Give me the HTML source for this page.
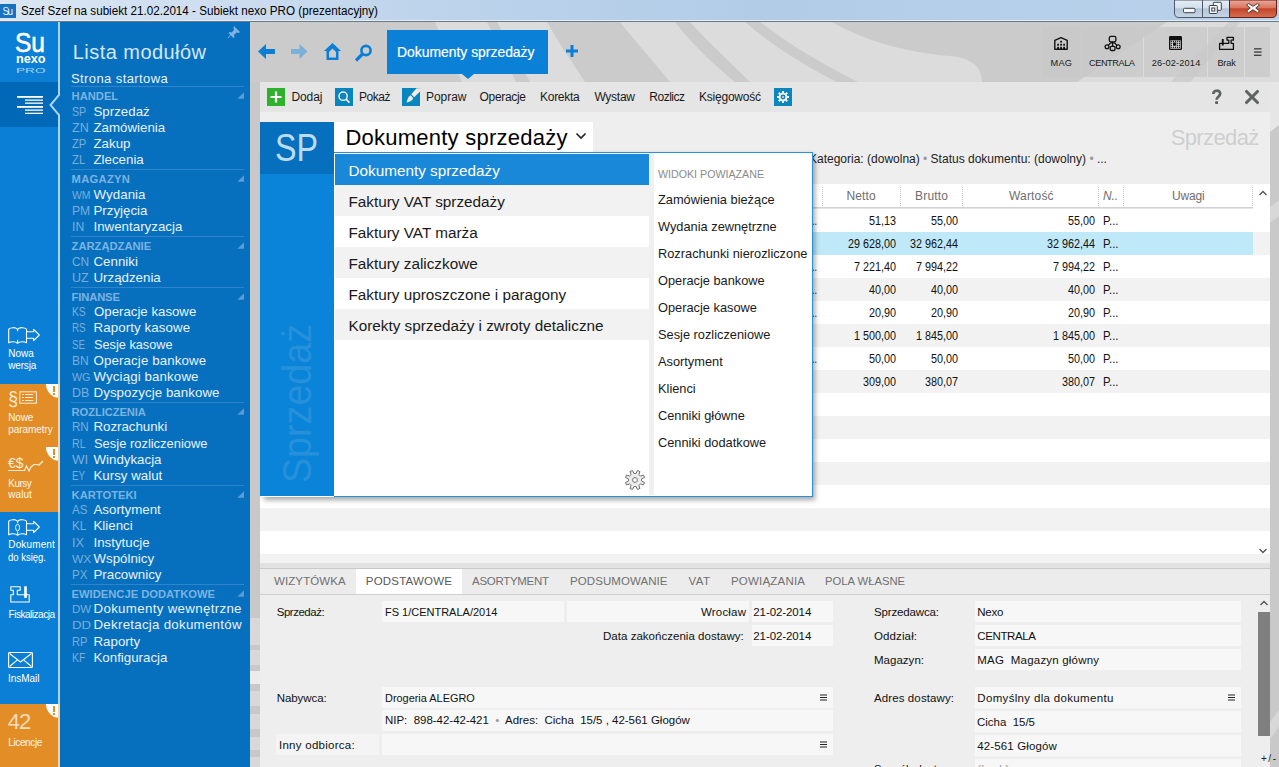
<!DOCTYPE html>
<html><head><meta charset="utf-8"><title>Subiekt nexo PRO</title>
<style>
*{margin:0;padding:0;box-sizing:border-box}
html,body{width:1279px;height:767px;overflow:hidden;background:#cbcbcb;font-family:"Liberation Sans",sans-serif}
.a{position:absolute;white-space:nowrap}
svg.a{overflow:visible}
</style></head><body>
<div class="a" style="left:0px;top:0px;width:1279px;height:21px;background:linear-gradient(90deg,#dae6f3 0%,#cfdef0 15%,#bcd3eb 35%,#b2cce8 60%,#b6cfea 80%,#b9d1eb 100%);"></div>
<div class="a" style="left:0px;top:20px;width:1279px;height:1px;background:#e4edf6;"></div>
<div class="a" style="left:0px;top:21px;width:1279px;height:1px;background:#6b7886;"></div>
<div class="a" style="left:0px;top:4px;width:16px;height:14px;background:#1573c2;"></div>
<div class="a" style="left:2.50px;top:7.00px;font-size:10px;line-height:10px;color:#eef5fb;letter-spacing:-1.731px;">Su</div>
<div class="a" style="left:21.00px;top:4.80px;font-size:12px;line-height:12px;color:#000;transform:scaleX(0.9713);transform-origin:0 0;">Szef Szef na subiekt 21.02.2014 - Subiekt nexo PRO (prezentacyjny)</div>
<svg class="a" style="left:1173px;top:0px" width="106" height="19" viewBox="0 0 106 19">
<defs><linearGradient id="wb" x1="0" y1="0" x2="0" y2="1"><stop offset="0" stop-color="#e6eef7"/><stop offset="0.45" stop-color="#d3dfec"/><stop offset="0.5" stop-color="#b4c6da"/><stop offset="1" stop-color="#c8d6e6"/></linearGradient>
<linearGradient id="wc" x1="0" y1="0" x2="0" y2="1"><stop offset="0" stop-color="#eaa89a"/><stop offset="0.45" stop-color="#d9775f"/><stop offset="0.5" stop-color="#c5442a"/><stop offset="1" stop-color="#d56f52"/></linearGradient></defs>
<path d="M1.5 0 V13 Q1.5 17.5 6 17.5 H56.5 V0 Z" fill="url(#wb)" stroke="#4f5a66" stroke-width="1"/>
<path d="M56.5 0 V17.5 H99 Q103.5 17.5 103.5 13 V0 Z" fill="url(#wc)" stroke="#6a1e12" stroke-width="1"/>
<line x1="29.5" y1="0" x2="29.5" y2="17" stroke="#4f5a66"/>
<rect x="10.5" y="8.3" width="11.5" height="4.4" rx="1" fill="#f4f6f8" stroke="#39424c"/>
<rect x="40.3" y="2.3" width="8" height="8" rx="0.8" fill="#f4f6f8" stroke="#39424c"/><rect x="36.3" y="5.5" width="8" height="8" rx="0.8" fill="#f4f6f8" stroke="#39424c"/><rect x="38.8" y="8" width="3" height="3" fill="none" stroke="#39424c"/>
<path d="M75.5 3.5 L80 6.3 L84.5 3.5 L86.5 5 L82.8 8 L86.5 11 L84.5 12.8 L80 9.8 L75.5 12.8 L73.5 11 L77.2 8 L73.5 5 Z" fill="#fafafa" stroke="#4a2a22" stroke-width="0.9" stroke-linejoin="round"/>
</svg>
<div class="a" style="left:250px;top:22px;width:1029px;height:745px;background:#cbcbcb;"></div>
<svg class="a" style="left:250px;top:22px" width="1029" height="60" viewBox="250 22 1029 60">
<path d="M435 22 L487 22 L516 82 L462 82 Z" fill="#dcdcdc"/><path d="M1167 22 L1229 22 L1171 82 L1077 82 Z" fill="#dcdcdc"/><path d="M1240 22 L1279 22 L1279 82 L1190 82 Z" fill="#dcdcdc"/><path d="M1229 22 L1240 22 L1190 82 L1171 82 Z" fill="#cfcfcf"/>
<path d="M497 22 L547 22 C560 45 572 62 585 82 L530 82 Z" fill="#dcdcdc"/>
<path d="M620 22 L675 22 C693 45 712 63 735 82 L670 82 C652 60 636 42 620 22 Z" fill="#dcdcdc"/>
<path d="M690 22 L745 22 C772 45 803 65 837 82 L750 82 C728 60 708 42 690 22 Z" fill="#dcdcdc"/>
<path d="M760 22 L832 22 C860 38 900 52 950 56 C975 58 982 70 982 82 L858 82 C822 64 790 45 760 22 Z" fill="#dcdcdc"/>
</svg>
<svg class="a" style="left:256px;top:40px" width="120" height="24" viewBox="256 40 120 24">
<path d="M258 51.5 L266 44 L266 49 L275 49 L275 54 L266 54 L266 59 Z" fill="#0a7fd5"/>
<path d="M307.5 51.5 L299.5 44 L299.5 49 L291 49 L291 54 L299.5 54 L299.5 59 Z" fill="#7ab1da"/>
<path d="M324 51 L332.5 43 L341 51 L338.5 51 L338.5 60 L326.5 60 L326.5 51 Z M329 52 L329 57.5 L336 57.5 L336 52 L332.5 48.5 Z" fill="#0a7fd5" fill-rule="evenodd"/>
<circle cx="366" cy="50.5" r="4.6" fill="none" stroke="#0a7fd5" stroke-width="2.6"/>
<path d="M362.5 54 L356 60.5" stroke="#0a7fd5" stroke-width="3.2" stroke-linecap="butt"/>
</svg>
<div class="a" style="left:387px;top:30px;width:161px;height:44px;background:#0a80d6;"></div>
<svg class="a" style="left:462px;top:74px" width="12" height="6" viewBox="0 0 12 6"><path d="M0 0 L12 0 L6 5 Z" fill="#0a80d6"/></svg>
<div class="a" style="left:397.00px;top:44.80px;font-size:14.3px;line-height:14.3px;color:#fff;transform:scaleX(0.9721);transform-origin:0 0;-webkit-text-stroke:0.2px #fff;">Dokumenty sprzedaży</div>
<svg class="a" style="left:565px;top:44px" width="14" height="14" viewBox="0 0 14 14"><path d="M5.5 1 H8.5 V5.5 H13 V8.5 H8.5 V13 H5.5 V8.5 H1 V5.5 H5.5 Z" fill="#0a7fd5"/></svg>
<div class="a" style="left:1042px;top:27px;width:38px;height:50px;background:rgba(200,200,200,0.72);"></div>
<div class="a" style="left:1081px;top:27px;width:62px;height:50px;background:rgba(200,200,200,0.72);"></div>
<div class="a" style="left:1144px;top:27px;width:63px;height:50px;background:rgba(200,200,200,0.72);"></div>
<div class="a" style="left:1208px;top:27px;width:36px;height:50px;background:rgba(200,200,200,0.72);"></div>
<div class="a" style="left:1245px;top:27px;width:25px;height:50px;background:rgba(200,200,200,0.72);"></div>
<div class="a" style="left:1050.45px;top:58.70px;font-size:9.2px;line-height:9.2px;color:#1a1a1a;letter-spacing:0.286px;">MAG</div>
<div class="a" style="left:1089.00px;top:58.70px;font-size:9.2px;line-height:9.2px;color:#1a1a1a;letter-spacing:-0.430px;">CENTRALA</div>
<div class="a" style="left:1151.75px;top:58.70px;font-size:9.2px;line-height:9.2px;color:#1a1a1a;letter-spacing:0.167px;">26-02-2014</div>
<div class="a" style="left:1217.45px;top:58.70px;font-size:9.2px;line-height:9.2px;color:#1a1a1a;letter-spacing:-0.197px;">Brak</div>
<svg class="a" style="left:1040px;top:30px" width="235" height="25" viewBox="1040 30 235 25">
<path d="M1054.8 49.3 V40.3 L1061 37.6 L1067.2 40.3 V49.3 Z" fill="none" stroke="#111" stroke-width="1.4" stroke-linejoin="round"/>
<g fill="#111"><rect x="1060.2" y="40.8" width="1.8" height="1.8"/><rect x="1057.2" y="43.8" width="1.8" height="1.8"/><rect x="1060.2" y="43.8" width="1.8" height="1.8"/><rect x="1063.2" y="43.8" width="1.8" height="1.8"/><rect x="1057.2" y="46.8" width="1.8" height="2.5"/><rect x="1060.2" y="46.8" width="1.8" height="2.5"/><rect x="1063.2" y="46.8" width="1.8" height="2.5"/></g>
<g fill="none" stroke="#111" stroke-width="1.3"><rect x="1109.3" y="36.4" width="6.6" height="5.4" rx="1.6"/><circle cx="1107" cy="46.8" r="1.9"/><circle cx="1118.2" cy="46.8" r="1.9"/><rect x="1110.2" y="46.3" width="4.8" height="4.2" rx="1.3"/><path d="M1112.6 41.8 V46.3 M1108.3 45.4 L1110.6 42.8 H1114.6 L1116.9 45.4"/></g>
<rect x="1169" y="36" width="13" height="14" rx="1.2" fill="#111"/><rect x="1170.3" y="40.3" width="10.4" height="8.4" fill="#cbcbcb"/>
<g fill="#111"><rect x="1170.8" y="40.8" width="1.1" height="1.1"/><rect x="1172.9" y="40.8" width="1.1" height="1.1"/><rect x="1174.9" y="40.8" width="1.1" height="1.1"/><rect x="1176.9" y="40.8" width="1.1" height="1.1"/><rect x="1178.9" y="40.8" width="1.1" height="1.1"/>
<rect x="1170.8" y="42.8" width="1.1" height="1.1"/><rect x="1178.9" y="42.8" width="1.1" height="1.1"/><rect x="1176.9" y="42.8" width="1.1" height="1.1"/><rect x="1170.8" y="44.8" width="1.1" height="1.1"/><rect x="1176.9" y="44.8" width="1.1" height="1.1"/><rect x="1178.9" y="44.8" width="1.1" height="1.1"/>
<rect x="1170.8" y="46.8" width="1.1" height="1.1"/><rect x="1172.9" y="46.8" width="1.1" height="1.1"/><rect x="1174.9" y="46.8" width="1.1" height="1.1"/><rect x="1176.9" y="46.8" width="1.1" height="1.1"/><rect x="1178.9" y="46.8" width="1.1" height="1.1"/>
<rect x="1173" y="42.5" width="3.2" height="3.2"/></g>
<path d="M1227 37.4 H1233.4 V40.2 H1231.1 V43.3 H1233.4 V49.4 H1219.6 V43.3 H1228.8 V40.2 H1227 Z" fill="none" stroke="#111" stroke-width="1.3" stroke-linejoin="round"/>
<rect x="1221.8" y="39" width="1.9" height="6.5" fill="#111"/>
<g fill="#222"><rect x="1254" y="48.3" width="7.5" height="1.1"/><rect x="1254" y="51.5" width="7.5" height="1.1"/><rect x="1254" y="54.7" width="7.5" height="1.1"/></g>
</svg>
<div class="a" style="left:260px;top:82px;width:1010px;height:30px;background:#e5e5e5;"></div>
<div class="a" style="left:260px;top:112px;width:1010px;height:10px;background:#eeeeee;"></div>
<div class="a" style="left:267px;top:88px;width:18px;height:18px;background:#2eb22e;"></div>
<svg class="a" style="left:267px;top:88px" width="18" height="18" viewBox="0 0 18 18"><path d="M7.9 3.5 H10.1 V7.9 H14.5 V10.1 H10.1 V14.5 H7.9 V10.1 H3.5 V7.9 H7.9 Z" fill="#fff"/></svg>
<div class="a" style="left:335px;top:88px;width:18px;height:18px;background:#0686bd;"></div>
<svg class="a" style="left:335px;top:88px" width="18" height="18" viewBox="0 0 18 18"><circle cx="8.1" cy="8.2" r="4.1" fill="none" stroke="#f1ece8" stroke-width="1.5"/><path d="M11 11.2 L14.4 14.6" stroke="#f1ece8" stroke-width="1.9"/></svg>
<div class="a" style="left:402px;top:88px;width:18px;height:18px;background:#0686bd;"></div>
<svg class="a" style="left:402px;top:88px" width="18" height="18" viewBox="0 0 18 18"><path d="M14.6 0.3 L18 0.3 L18 3.4 L12.2 9.2 L9.2 6.2 Z" fill="#f1ece8"/><path d="M8.5 7.2 L11.2 9.9 C10.7 12.2 8.6 13.6 4.6 14.6 C5.2 11.2 6.4 8.6 8.5 7.2 Z" fill="#f1ece8"/></svg>
<div class="a" style="left:291.40px;top:91.20px;font-size:12px;line-height:12px;color:#1a1a1a;letter-spacing:-0.088px;">Dodaj</div>
<div class="a" style="left:359.00px;top:91.20px;font-size:12px;line-height:12px;color:#1a1a1a;letter-spacing:-0.463px;">Pokaż</div>
<div class="a" style="left:426.00px;top:91.20px;font-size:12px;line-height:12px;color:#1a1a1a;letter-spacing:-0.037px;">Popraw</div>
<div class="a" style="left:479.50px;top:91.20px;font-size:12px;line-height:12px;color:#1a1a1a;letter-spacing:-0.313px;">Operacje</div>
<div class="a" style="left:540.00px;top:91.20px;font-size:12px;line-height:12px;color:#1a1a1a;letter-spacing:-0.276px;">Korekta</div>
<div class="a" style="left:594.40px;top:91.20px;font-size:12px;line-height:12px;color:#1a1a1a;letter-spacing:-0.259px;">Wystaw</div>
<div class="a" style="left:649.30px;top:91.20px;font-size:12px;line-height:12px;color:#1a1a1a;letter-spacing:-0.495px;">Rozlicz</div>
<div class="a" style="left:699.00px;top:91.20px;font-size:12px;line-height:12px;color:#1a1a1a;letter-spacing:-0.226px;">Księgowość</div>
<div class="a" style="left:774px;top:88px;width:18px;height:18px;background:#0a86bc;"></div>
<svg class="a" style="left:774px;top:88px" width="18" height="18" viewBox="0 0 18 18"><path d="M7.32 4.93 L7.97 4.72 L7.95 2.99 L10.05 2.99 L10.03 4.72 L10.68 4.93 L11.30 5.25 L12.51 4.01 L13.99 5.49 L12.75 6.70 L13.07 7.32 L13.28 7.97 L15.01 7.95 L15.01 10.05 L13.28 10.03 L13.07 10.68 L12.75 11.30 L13.99 12.51 L12.51 13.99 L11.30 12.75 L10.68 13.07 L10.03 13.28 L10.05 15.01 L7.95 15.01 L7.97 13.28 L7.32 13.07 L6.70 12.75 L5.49 13.99 L4.01 12.51 L5.25 11.30 L4.93 10.68 L4.72 10.03 L2.99 10.05 L2.99 7.95 L4.72 7.97 L4.93 7.32 L5.25 6.70 L4.01 5.49 L5.49 4.01 L6.70 5.25 Z M9 6.6 A2.4 2.4 0 1 0 9 11.4 A2.4 2.4 0 1 0 9 6.6 Z" fill="#f1ece8" fill-rule="evenodd"/><rect x="8.2" y="8.2" width="1.6" height="1.6" fill="#f1ece8"/></svg>
<svg class="a" style="left:1208px;top:86px" width="18" height="22" viewBox="1208 86 18 22"><path d="M1213.3 94 C1213.3 89.8 1220.2 89.6 1220.2 93.6 C1220.2 96.8 1216.6 96.6 1216.6 99.8" fill="none" stroke="#5f6461" stroke-width="2.7"/><rect x="1215.2" y="101.2" width="2.8" height="2.8" fill="#5f6461"/></svg>
<svg class="a" style="left:1243px;top:88px" width="18" height="18" viewBox="0 0 18 18"><path d="M3.5 3.5 L14.5 14.5 M14.5 3.5 L3.5 14.5" stroke="#5f6461" stroke-width="3.1" stroke-linecap="round"/></svg>
<div class="a" style="left:260px;top:122px;width:1010px;height:62px;background:#eeeeee;"></div>
<div class="a" style="left:334px;top:122px;width:259px;height:30px;background:#ffffff;"></div>
<div class="a" style="left:345.40px;top:126.70px;font-size:22px;line-height:22px;color:#000;letter-spacing:0.242px;">Dokumenty sprzedaży</div>
<svg class="a" style="left:574px;top:131px" width="14" height="10" viewBox="0 0 14 10"><path d="M2.5 2.5 L7 7 L11.5 2.5" fill="none" stroke="#222" stroke-width="1.6"/></svg>
<div class="a" style="left:1170.70px;top:127.30px;font-size:22px;line-height:22px;color:#cfcfcf;letter-spacing:-0.620px;">Sprzedaż</div>
<div class="a" style="left:809.00px;top:153.00px;font-size:12px;line-height:12px;color:#222;">Kategoria: (dowolna) <span style="color:#999">•</span> Status dokumentu: (dowolny) <span style="color:#999">•</span> ...</div>
<div class="a" style="left:260px;top:184px;width:1010px;height:25px;background:#ffffff;"></div>
<div class="a" style="left:260px;top:207px;width:993px;height:1px;background:#d2d2d2;"></div>
<div class="a" style="left:260px;top:208px;width:993px;height:1px;background:#e6e6e6;"></div>
<div class="a" style="left:260px;top:209px;width:1010px;height:23px;background:#ffffff;"></div>
<div class="a" style="left:260px;top:232px;width:1010px;height:23px;background:#f2f2f2;"></div>
<div class="a" style="left:260px;top:255px;width:1010px;height:23px;background:#ffffff;"></div>
<div class="a" style="left:260px;top:278px;width:1010px;height:23px;background:#f2f2f2;"></div>
<div class="a" style="left:260px;top:301px;width:1010px;height:23px;background:#ffffff;"></div>
<div class="a" style="left:260px;top:324px;width:1010px;height:23px;background:#f2f2f2;"></div>
<div class="a" style="left:260px;top:347px;width:1010px;height:23px;background:#ffffff;"></div>
<div class="a" style="left:260px;top:370px;width:1010px;height:23px;background:#f2f2f2;"></div>
<div class="a" style="left:260px;top:393px;width:1010px;height:23px;background:#ffffff;"></div>
<div class="a" style="left:260px;top:416px;width:1010px;height:23px;background:#f2f2f2;"></div>
<div class="a" style="left:260px;top:439px;width:1010px;height:23px;background:#ffffff;"></div>
<div class="a" style="left:260px;top:462px;width:1010px;height:23px;background:#f2f2f2;"></div>
<div class="a" style="left:260px;top:485px;width:1010px;height:23px;background:#ffffff;"></div>
<div class="a" style="left:260px;top:508px;width:1010px;height:23px;background:#f2f2f2;"></div>
<div class="a" style="left:260px;top:531px;width:1010px;height:23px;background:#ffffff;"></div>
<div class="a" style="left:260px;top:554px;width:1010px;height:9px;background:#f2f2f2;"></div>
<div class="a" style="left:260px;top:232px;width:993px;height:23px;background:#bfe9f9;"></div>
<div class="a" style="left:822px;top:187px;width:0;height:19px;border-left:1px dotted #c8c8c8"></div>
<div class="a" style="left:900px;top:187px;width:0;height:19px;border-left:1px dotted #c8c8c8"></div>
<div class="a" style="left:962px;top:187px;width:0;height:19px;border-left:1px dotted #c8c8c8"></div>
<div class="a" style="left:1098px;top:187px;width:0;height:19px;border-left:1px dotted #c8c8c8"></div>
<div class="a" style="left:1123px;top:187px;width:0;height:19px;border-left:1px dotted #c8c8c8"></div>
<div class="a" style="left:1252px;top:187px;width:0;height:19px;border-left:1px dotted #c8c8c8"></div>
<div class="a" style="left:846.40px;top:190.00px;font-size:12px;line-height:12px;color:#6e6e6e;letter-spacing:0.130px;">Netto</div>
<div class="a" style="left:915.00px;top:190.00px;font-size:12px;line-height:12px;color:#6e6e6e;letter-spacing:0.197px;">Brutto</div>
<div class="a" style="left:1009.00px;top:190.00px;font-size:12px;line-height:12px;color:#6e6e6e;letter-spacing:0.174px;">Wartość</div>
<div class="a" style="left:1103.00px;top:190.00px;font-size:12px;line-height:12px;color:#6e6e6e;font-style:italic;letter-spacing:-0.167px;">N..</div>
<div class="a" style="left:1172.00px;top:190.00px;font-size:12px;line-height:12px;color:#6e6e6e;letter-spacing:-0.186px;">Uwagi</div>
<svg class="a" style="left:1257px;top:188px" width="12" height="10" viewBox="0 0 12 10"><path d="M2.5 7 L6 3.5 L9.5 7" fill="none" stroke="#555" stroke-width="1.4"/></svg>
<div class="a" style="left:869.27px;top:215.30px;font-size:12px;line-height:12px;color:#111;transform:scaleX(0.9000);transform-origin:0 0;">51,13</div>
<div class="a" style="left:931.17px;top:215.30px;font-size:12px;line-height:12px;color:#111;transform:scaleX(0.9000);transform-origin:0 0;">55,00</div>
<div class="a" style="left:1067.57px;top:215.30px;font-size:12px;line-height:12px;color:#111;transform:scaleX(0.9000);transform-origin:0 0;">55,00</div>
<div class="a" style="left:1103.00px;top:215.30px;font-size:12px;line-height:12px;color:#111;transform:scaleX(0.9417);transform-origin:0 0;">P...</div>
<div class="a" style="left:812.00px;top:215.30px;font-size:12px;line-height:12px;color:#111;transform:scaleX(0.7499);transform-origin:0 0;">..</div>
<div class="a" style="left:848.25px;top:238.30px;font-size:12px;line-height:12px;color:#111;transform:scaleX(0.9000);transform-origin:0 0;">29 628,00</div>
<div class="a" style="left:910.15px;top:238.30px;font-size:12px;line-height:12px;color:#111;transform:scaleX(0.9000);transform-origin:0 0;">32 962,44</div>
<div class="a" style="left:1046.55px;top:238.30px;font-size:12px;line-height:12px;color:#111;transform:scaleX(0.9000);transform-origin:0 0;">32 962,44</div>
<div class="a" style="left:1103.00px;top:238.30px;font-size:12px;line-height:12px;color:#111;transform:scaleX(0.9417);transform-origin:0 0;">P...</div>
<div class="a" style="left:854.26px;top:261.30px;font-size:12px;line-height:12px;color:#111;transform:scaleX(0.9000);transform-origin:0 0;">7 221,40</div>
<div class="a" style="left:916.16px;top:261.30px;font-size:12px;line-height:12px;color:#111;transform:scaleX(0.9000);transform-origin:0 0;">7 994,22</div>
<div class="a" style="left:1052.56px;top:261.30px;font-size:12px;line-height:12px;color:#111;transform:scaleX(0.9000);transform-origin:0 0;">7 994,22</div>
<div class="a" style="left:1103.00px;top:261.30px;font-size:12px;line-height:12px;color:#111;transform:scaleX(0.9417);transform-origin:0 0;">P...</div>
<div class="a" style="left:812.00px;top:261.30px;font-size:12px;line-height:12px;color:#111;transform:scaleX(0.7499);transform-origin:0 0;">..</div>
<div class="a" style="left:869.27px;top:284.30px;font-size:12px;line-height:12px;color:#111;transform:scaleX(0.9000);transform-origin:0 0;">40,00</div>
<div class="a" style="left:931.17px;top:284.30px;font-size:12px;line-height:12px;color:#111;transform:scaleX(0.9000);transform-origin:0 0;">40,00</div>
<div class="a" style="left:1067.57px;top:284.30px;font-size:12px;line-height:12px;color:#111;transform:scaleX(0.9000);transform-origin:0 0;">40,00</div>
<div class="a" style="left:1103.00px;top:284.30px;font-size:12px;line-height:12px;color:#111;transform:scaleX(0.9417);transform-origin:0 0;">P...</div>
<div class="a" style="left:812.00px;top:284.30px;font-size:12px;line-height:12px;color:#111;transform:scaleX(0.7499);transform-origin:0 0;">..</div>
<div class="a" style="left:869.27px;top:307.30px;font-size:12px;line-height:12px;color:#111;transform:scaleX(0.9000);transform-origin:0 0;">20,90</div>
<div class="a" style="left:931.17px;top:307.30px;font-size:12px;line-height:12px;color:#111;transform:scaleX(0.9000);transform-origin:0 0;">20,90</div>
<div class="a" style="left:1067.57px;top:307.30px;font-size:12px;line-height:12px;color:#111;transform:scaleX(0.9000);transform-origin:0 0;">20,90</div>
<div class="a" style="left:1103.00px;top:307.30px;font-size:12px;line-height:12px;color:#111;transform:scaleX(0.9417);transform-origin:0 0;">P...</div>
<div class="a" style="left:812.00px;top:307.30px;font-size:12px;line-height:12px;color:#111;transform:scaleX(0.7499);transform-origin:0 0;">..</div>
<div class="a" style="left:854.26px;top:330.30px;font-size:12px;line-height:12px;color:#111;transform:scaleX(0.9000);transform-origin:0 0;">1 500,00</div>
<div class="a" style="left:916.16px;top:330.30px;font-size:12px;line-height:12px;color:#111;transform:scaleX(0.9000);transform-origin:0 0;">1 845,00</div>
<div class="a" style="left:1052.56px;top:330.30px;font-size:12px;line-height:12px;color:#111;transform:scaleX(0.9000);transform-origin:0 0;">1 845,00</div>
<div class="a" style="left:1103.00px;top:330.30px;font-size:12px;line-height:12px;color:#111;transform:scaleX(0.9417);transform-origin:0 0;">P...</div>
<div class="a" style="left:869.27px;top:353.30px;font-size:12px;line-height:12px;color:#111;transform:scaleX(0.9000);transform-origin:0 0;">50,00</div>
<div class="a" style="left:931.17px;top:353.30px;font-size:12px;line-height:12px;color:#111;transform:scaleX(0.9000);transform-origin:0 0;">50,00</div>
<div class="a" style="left:1067.57px;top:353.30px;font-size:12px;line-height:12px;color:#111;transform:scaleX(0.9000);transform-origin:0 0;">50,00</div>
<div class="a" style="left:1103.00px;top:353.30px;font-size:12px;line-height:12px;color:#111;transform:scaleX(0.9417);transform-origin:0 0;">P...</div>
<div class="a" style="left:812.00px;top:353.30px;font-size:12px;line-height:12px;color:#111;transform:scaleX(0.7499);transform-origin:0 0;">..</div>
<div class="a" style="left:863.27px;top:376.30px;font-size:12px;line-height:12px;color:#111;transform:scaleX(0.9000);transform-origin:0 0;">309,00</div>
<div class="a" style="left:925.17px;top:376.30px;font-size:12px;line-height:12px;color:#111;transform:scaleX(0.9000);transform-origin:0 0;">380,07</div>
<div class="a" style="left:1061.57px;top:376.30px;font-size:12px;line-height:12px;color:#111;transform:scaleX(0.9000);transform-origin:0 0;">380,07</div>
<div class="a" style="left:1103.00px;top:376.30px;font-size:12px;line-height:12px;color:#111;transform:scaleX(0.9417);transform-origin:0 0;">P...</div>
<svg class="a" style="left:1257px;top:546px" width="12" height="10" viewBox="0 0 12 10"><path d="M2.5 3 L6 6.5 L9.5 3" fill="none" stroke="#555" stroke-width="1.4"/></svg>
<div class="a" style="left:260px;top:563px;width:1010px;height:5px;background:#e2e2e2;"></div>
<div class="a" style="left:260px;top:568px;width:1010px;height:1px;background:#c9c9c9;"></div>
<div class="a" style="left:260px;top:569px;width:1010px;height:26px;background:#ececec;"></div>
<div class="a" style="left:356px;top:569px;width:106px;height:26px;background:#ffffff;"></div>
<div class="a" style="left:260px;top:594px;width:1010px;height:1px;background:#cfcfcf;"></div>
<div class="a" style="left:274.00px;top:576.00px;font-size:11.5px;line-height:11.5px;color:#707070;letter-spacing:0.099px;">WIZYTÓWKA</div>
<div class="a" style="left:365.80px;top:576.00px;font-size:11.5px;line-height:11.5px;color:#5a5a5a;letter-spacing:0.208px;">PODSTAWOWE</div>
<div class="a" style="left:472.00px;top:576.00px;font-size:11.5px;line-height:11.5px;color:#707070;letter-spacing:-0.295px;">ASORTYMENT</div>
<div class="a" style="left:570.00px;top:576.00px;font-size:11.5px;line-height:11.5px;color:#707070;letter-spacing:0.074px;">PODSUMOWANIE</div>
<div class="a" style="left:688.50px;top:576.00px;font-size:11.5px;line-height:11.5px;color:#707070;letter-spacing:0.421px;">VAT</div>
<div class="a" style="left:731.00px;top:576.00px;font-size:11.5px;line-height:11.5px;color:#707070;letter-spacing:0.200px;">POWIĄZANIA</div>
<div class="a" style="left:825.00px;top:576.00px;font-size:11.5px;line-height:11.5px;color:#707070;transform:scaleX(0.9789);transform-origin:0 0;">POLA WŁASNE</div>
<div class="a" style="left:260px;top:595px;width:1010px;height:172px;background:#eeeeee;"></div>
<div class="a" style="left:382px;top:601px;width:182px;height:21px;background:#f7f7f7;"></div>
<div class="a" style="left:567px;top:601px;width:182px;height:21px;background:#f7f7f7;"></div>
<div class="a" style="left:752px;top:601px;width:81px;height:21px;background:#f7f7f7;"></div>
<div class="a" style="left:752px;top:625px;width:81px;height:21px;background:#f7f7f7;"></div>
<div class="a" style="left:382px;top:687px;width:451px;height:21px;background:#f7f7f7;"></div>
<div class="a" style="left:382px;top:710px;width:451px;height:21px;background:#f7f7f7;"></div>
<div class="a" style="left:382px;top:734px;width:451px;height:21px;background:#f7f7f7;"></div>
<div class="a" style="left:276px;top:734px;width:103px;height:21px;background:#f4f4f4;"></div>
<div class="a" style="left:975px;top:601px;width:266px;height:21px;background:#f7f7f7;"></div>
<div class="a" style="left:975px;top:625px;width:266px;height:21px;background:#f7f7f7;"></div>
<div class="a" style="left:975px;top:649px;width:266px;height:21px;background:#f7f7f7;"></div>
<div class="a" style="left:975px;top:687px;width:266px;height:21px;background:#f7f7f7;"></div>
<div class="a" style="left:975px;top:711px;width:266px;height:21px;background:#f7f7f7;"></div>
<div class="a" style="left:975px;top:735px;width:266px;height:21px;background:#f7f7f7;"></div>
<div class="a" style="left:975px;top:759px;width:266px;height:21px;background:#f7f7f7;"></div>
<div class="a" style="left:276.70px;top:607.00px;font-size:11.5px;line-height:11.5px;color:#111;letter-spacing:-0.472px;">Sprzedaż:</div>
<div class="a" style="left:384.60px;top:607.00px;font-size:11.5px;line-height:11.5px;color:#111;transform:scaleX(0.9557);transform-origin:0 0;">FS 1/CENTRALA/2014</div>
<div class="a" style="left:701.00px;top:607.00px;font-size:11.5px;line-height:11.5px;color:#111;letter-spacing:0.187px;">Wrocław</div>
<div class="a" style="left:753.30px;top:607.00px;font-size:11.5px;line-height:11.5px;color:#111;letter-spacing:-0.092px;">21-02-2014</div>
<div class="a" style="left:603.00px;top:630.70px;font-size:11.5px;line-height:11.5px;color:#111;letter-spacing:0.029px;">Data zakończenia dostawy:</div>
<div class="a" style="left:753.30px;top:630.70px;font-size:11.5px;line-height:11.5px;color:#111;letter-spacing:-0.092px;">21-02-2014</div>
<div class="a" style="left:276.70px;top:692.60px;font-size:11.5px;line-height:11.5px;color:#111;letter-spacing:-0.070px;">Nabywca:</div>
<div class="a" style="left:384.60px;top:692.60px;font-size:11.5px;line-height:11.5px;color:#111;transform:scaleX(0.9493);transform-origin:0 0;">Drogeria ALEGRO</div>
<div class="a" style="left:384.60px;top:715.20px;font-size:11.5px;line-height:11.5px;color:#111;transform:scaleX(0.9968);transform-origin:0 0;">NIP:&nbsp; 898-42-42-421&nbsp; <span style="color:#999">•</span>&nbsp; Adres:&nbsp; Cicha&nbsp; 15/5 , 42-561 Głogów</div>
<div class="a" style="left:279.00px;top:739.60px;font-size:11.5px;line-height:11.5px;color:#111;letter-spacing:0.258px;">Inny odbiorca:</div>
<svg class="a" style="left:820px;top:693.5px" width="8" height="8" viewBox="0 0 8 8"><path d="M0 1 H7 M0 3.5 H7 M0 6 H7" stroke="#222" stroke-width="1.1"/></svg>
<svg class="a" style="left:820px;top:740.5px" width="8" height="8" viewBox="0 0 8 8"><path d="M0 1 H7 M0 3.5 H7 M0 6 H7" stroke="#222" stroke-width="1.1"/></svg>
<svg class="a" style="left:1228px;top:693.5px" width="8" height="8" viewBox="0 0 8 8"><path d="M0 1 H7 M0 3.5 H7 M0 6 H7" stroke="#222" stroke-width="1.1"/></svg>
<div class="a" style="left:874.00px;top:607.20px;font-size:11.5px;line-height:11.5px;color:#111;letter-spacing:-0.148px;">Sprzedawca:</div>
<div class="a" style="left:977.30px;top:607.20px;font-size:11.5px;line-height:11.5px;color:#111;letter-spacing:-0.282px;">Nexo</div>
<div class="a" style="left:874.00px;top:630.80px;font-size:11.5px;line-height:11.5px;color:#111;letter-spacing:0.116px;">Oddział:</div>
<div class="a" style="left:977.30px;top:630.80px;font-size:11.5px;line-height:11.5px;color:#111;letter-spacing:-0.392px;">CENTRALA</div>
<div class="a" style="left:874.00px;top:654.70px;font-size:11.5px;line-height:11.5px;color:#111;letter-spacing:0.020px;">Magazyn:</div>
<div class="a" style="left:977.30px;top:654.70px;font-size:11.5px;line-height:11.5px;color:#111;letter-spacing:0.192px;">MAG&nbsp; Magazyn główny</div>
<div class="a" style="left:874.00px;top:693.00px;font-size:11.5px;line-height:11.5px;color:#111;letter-spacing:0.106px;">Adres dostawy:</div>
<div class="a" style="left:977.30px;top:693.00px;font-size:11.5px;line-height:11.5px;color:#111;letter-spacing:0.328px;">Domyślny dla dokumentu</div>
<div class="a" style="left:977.30px;top:717.00px;font-size:11.5px;line-height:11.5px;color:#111;transform:scaleX(0.9970);transform-origin:0 0;">Cicha&nbsp; 15/5</div>
<div class="a" style="left:977.30px;top:740.50px;font-size:11.5px;line-height:11.5px;color:#111;letter-spacing:0.125px;">42-561 Głogów</div>
<div class="a" style="left:874.00px;top:764.00px;font-size:11.5px;line-height:11.5px;color:#111;transform:scaleX(0.9820);transform-origin:0 0;">Sposób dostawy:</div>
<div class="a" style="left:977.30px;top:764.00px;font-size:11.5px;line-height:11.5px;color:#999;letter-spacing:0.394px;">(brak)</div>
<svg class="a" style="left:1258px;top:598px" width="12" height="10" viewBox="0 0 12 10"><path d="M2.5 7 L6 3.5 L9.5 7" fill="none" stroke="#555" stroke-width="1.4"/></svg>
<div class="a" style="left:1258px;top:612px;width:12px;height:124px;background:#7f7f7f;"></div>
<svg class="a" style="left:1270px;top:82px" width="9" height="685" viewBox="0 0 9 685"><rect width="9" height="685" fill="#c9c9c9"/>
<path d="M0 0 L9 0 L9 43 L0 50 Z" fill="#e6e6e6"/><path d="M0 125 L9 118 L9 134 L0 141 Z M0 640 L9 628 L9 645 L0 657 Z" fill="#d8d8d8"/></svg>
<div class="a" style="left:1261.00px;top:754.00px;font-size:10px;line-height:10px;color:#222;letter-spacing:1.526px;">+/-</div>
<div class="a" style="left:250px;top:82px;width:10px;height:685px;background:#c8c8c8;"></div>
<div class="a" style="left:250px;top:618px;width:10px;height:27px;background:#d8d8d8;"></div>
<div class="a" style="left:250px;top:650px;width:10px;height:15px;background:#d8d8d8;"></div>
<div class="a" style="left:250px;top:671px;width:10px;height:13px;background:#ececec;"></div>
<div class="a" style="left:250px;top:691px;width:10px;height:15px;background:#d8d8d8;"></div>
<div class="a" style="left:250px;top:714px;width:10px;height:15px;background:#d8d8d8;"></div>
<div class="a" style="left:250px;top:737px;width:10px;height:13px;background:#d8d8d8;"></div>
<div class="a" style="left:250px;top:757px;width:10px;height:10px;background:#d8d8d8;"></div>
<div class="a" style="left:262px;top:152px;width:551px;height:345px;box-shadow:2px 3px 5px rgba(0,0,0,0.35)"></div>
<div class="a" style="left:260px;top:122px;width:74px;height:52px;background:#0670bf;"></div>
<div class="a" style="left:260px;top:174px;width:74px;height:322px;background:#0a84d8;"></div>
<div class="a" style="left:275.30px;top:127.70px;font-size:39.5px;line-height:39.5px;color:#bcdcf2;transform:scaleX(0.8161);transform-origin:0 0;">SP</div>
<svg class="a" style="left:260px;top:174px" width="74" height="322" viewBox="260 174 74 322"><text x="310.5" y="483" transform="rotate(-90 310.5 483)" font-family="Liberation Sans" font-size="41" fill="#2790db" textLength="159" lengthAdjust="spacingAndGlyphs">Sprzedaż</text></svg>
<div class="a" style="left:334px;top:152px;width:478px;height:345px;background:#ffffff;"></div>
<div class="a" style="left:334px;top:152px;width:479px;height:345px;border:1px solid #2a90d8;border-left:none"></div>
<div class="a" style="left:335px;top:154px;width:314px;height:31px;background:#1a88d9;"></div>
<div class="a" style="left:335px;top:185px;width:314px;height:31px;background:#f2f2f2;"></div>
<div class="a" style="left:335px;top:247px;width:314px;height:31px;background:#f2f2f2;"></div>
<div class="a" style="left:335px;top:309px;width:314px;height:31px;background:#f2f2f2;"></div>
<div class="a" style="left:649px;top:153px;width:5px;height:342px;background:#f0f0f0;"></div>
<div class="a" style="left:348.50px;top:162.70px;font-size:15.3px;line-height:15.3px;color:#fff;">Dokumenty sprzedaży</div>
<div class="a" style="left:348.50px;top:193.70px;font-size:15.3px;line-height:15.3px;color:#1a1a1a;">Faktury VAT sprzedaży</div>
<div class="a" style="left:348.50px;top:224.70px;font-size:15.3px;line-height:15.3px;color:#1a1a1a;">Faktury VAT marża</div>
<div class="a" style="left:348.50px;top:255.70px;font-size:15.3px;line-height:15.3px;color:#1a1a1a;">Faktury zaliczkowe</div>
<div class="a" style="left:348.50px;top:286.70px;font-size:15.3px;line-height:15.3px;color:#1a1a1a;">Faktury uproszczone i paragony</div>
<div class="a" style="left:348.50px;top:317.70px;font-size:15.3px;line-height:15.3px;color:#1a1a1a;">Korekty sprzedaży i zwroty detaliczne</div>
<div class="a" style="left:658.00px;top:168.50px;font-size:11px;line-height:11px;color:#8a8a8a;transform:scaleX(0.9690);transform-origin:0 0;">WIDOKI POWIĄZANE</div>
<div class="a" style="left:658.00px;top:194.30px;font-size:12.8px;line-height:12.8px;color:#1a1a1a;">Zamówienia bieżące</div>
<div class="a" style="left:658.00px;top:221.30px;font-size:12.8px;line-height:12.8px;color:#1a1a1a;">Wydania zewnętrzne</div>
<div class="a" style="left:658.00px;top:248.30px;font-size:12.8px;line-height:12.8px;color:#1a1a1a;">Rozrachunki nierozliczone</div>
<div class="a" style="left:658.00px;top:275.30px;font-size:12.8px;line-height:12.8px;color:#1a1a1a;">Operacje bankowe</div>
<div class="a" style="left:658.00px;top:302.30px;font-size:12.8px;line-height:12.8px;color:#1a1a1a;">Operacje kasowe</div>
<div class="a" style="left:658.00px;top:329.30px;font-size:12.8px;line-height:12.8px;color:#1a1a1a;">Sesje rozliczeniowe</div>
<div class="a" style="left:658.00px;top:356.30px;font-size:12.8px;line-height:12.8px;color:#1a1a1a;">Asortyment</div>
<div class="a" style="left:658.00px;top:383.30px;font-size:12.8px;line-height:12.8px;color:#1a1a1a;">Klienci</div>
<div class="a" style="left:658.00px;top:410.30px;font-size:12.8px;line-height:12.8px;color:#1a1a1a;">Cenniki główne</div>
<div class="a" style="left:658.00px;top:437.30px;font-size:12.8px;line-height:12.8px;color:#1a1a1a;">Cenniki dodatkowe</div>
<svg class="a" style="left:624px;top:469px" width="22" height="22" viewBox="0 0 22 22"><path d="M11.00 4.40 L12.03 4.48 L13.51 1.53 L15.92 2.53 L14.88 5.66 L15.67 6.33 L16.34 7.12 L19.47 6.08 L20.47 8.49 L17.52 9.97 L17.60 11.00 L17.52 12.03 L20.47 13.51 L19.47 15.92 L16.34 14.88 L15.67 15.67 L14.88 16.34 L15.92 19.47 L13.51 20.47 L12.03 17.52 L11.00 17.60 L9.97 17.52 L8.49 20.47 L6.08 19.47 L7.12 16.34 L6.33 15.67 L5.66 14.88 L2.53 15.92 L1.53 13.51 L4.48 12.03 L4.40 11.00 L4.48 9.97 L1.53 8.49 L2.53 6.08 L5.66 7.12 L6.33 6.33 L7.12 5.66 L6.08 2.53 L8.49 1.53 L9.97 4.48 Z" fill="#ececec" stroke="#6f6f6f" stroke-width="1" stroke-linejoin="round"/><circle cx="11" cy="11" r="2.4" fill="#fff" stroke="#6f6f6f" stroke-width="1"/></svg>
<div class="a" style="left:0px;top:22px;width:58px;height:745px;background:#0a7fd5;"></div>
<div class="a" style="left:0px;top:82px;width:58px;height:45px;background:#0068b6;"></div>
<div class="a" style="left:0px;top:384px;width:58px;height:128px;background:#e38d26;"></div>
<div class="a" style="left:0px;top:704px;width:58px;height:63px;background:#e38d26;"></div>
<div class="a" style="left:15.00px;top:29.30px;font-size:28px;line-height:28px;color:#fff;transform:scaleX(0.8760);transform-origin:0 0;-webkit-text-stroke:0.6px #fff;">Su</div>
<div class="a" style="left:15.50px;top:52.00px;font-size:13px;line-height:13px;color:#fff;font-weight:bold;transform:scaleX(0.9723);transform-origin:0 0;">nexo</div>
<div class="a" style="left:15.50px;top:66.80px;font-size:7.4px;line-height:7.4px;color:#a9d2f3;transform:scaleX(1.8420);transform-origin:0 0;">PRO</div>
<svg class="a" style="left:14px;top:92px" width="34" height="26" viewBox="14 92 34 26"><g fill="#fff">
<rect x="17" y="96" width="26" height="1.8"/><rect x="25" y="99.5" width="18" height="1.3"/><rect x="25" y="102.5" width="18" height="1.3"/>
<rect x="17" y="106" width="26" height="1.8"/><rect x="25" y="109.5" width="18" height="1.3"/><rect x="25" y="112.7" width="18" height="1.3"/></g></svg>
<div class="a" style="left:8.30px;top:349.30px;font-size:10px;line-height:10px;color:#ffffff;letter-spacing:-0.022px;">Nowa</div>
<div class="a" style="left:8.30px;top:360.50px;font-size:10px;line-height:10px;color:#ffffff;letter-spacing:-0.179px;">wersja</div>
<div class="a" style="left:8.30px;top:412.80px;font-size:10px;line-height:10px;color:#fff6ea;letter-spacing:-0.189px;">Nowe</div>
<div class="a" style="left:8.30px;top:424.70px;font-size:10px;line-height:10px;color:#fff6ea;letter-spacing:-0.064px;">parametry</div>
<div class="a" style="left:8.30px;top:478.50px;font-size:10px;line-height:10px;color:#fff6ea;letter-spacing:-0.515px;">Kursy</div>
<div class="a" style="left:8.30px;top:489.50px;font-size:10px;line-height:10px;color:#fff6ea;letter-spacing:0.039px;">walut</div>
<div class="a" style="left:8.30px;top:540.40px;font-size:10px;line-height:10px;color:#ffffff;letter-spacing:0.132px;">Dokument</div>
<div class="a" style="left:8.30px;top:553.00px;font-size:10px;line-height:10px;color:#ffffff;transform:scaleX(0.9494);transform-origin:0 0;">do księg.</div>
<div class="a" style="left:8.50px;top:610.00px;font-size:10px;line-height:10px;color:#ffffff;letter-spacing:-0.471px;">Fiskalizacja</div>
<div class="a" style="left:8.00px;top:673.50px;font-size:10px;line-height:10px;color:#ffffff;letter-spacing:-0.029px;">InsMail</div>
<div class="a" style="left:7.70px;top:711.00px;font-size:22px;line-height:22px;color:#f7dcb9;letter-spacing:-0.971px;">42</div>
<div class="a" style="left:8.30px;top:737.60px;font-size:10px;line-height:10px;color:#fff6ea;letter-spacing:-0.384px;">Licencje</div>
<div class="a" style="left:46px;top:370px;width:28px;height:28px;border-radius:50%;background:#fff;clip-path:inset(14px 16px 0 0)"></div>
<div class="a" style="left:52.5px;top:386px;width:2px;height:5.5px;background:#e38d26"></div><div class="a" style="left:52.5px;top:393px;width:2px;height:2px;background:#e38d26"></div>
<div class="a" style="left:46px;top:433px;width:28px;height:28px;border-radius:50%;background:#fff;clip-path:inset(14px 16px 0 0)"></div>
<div class="a" style="left:52.5px;top:449px;width:2px;height:5.5px;background:#e38d26"></div><div class="a" style="left:52.5px;top:456px;width:2px;height:2px;background:#e38d26"></div>
<div class="a" style="left:46px;top:690px;width:28px;height:28px;border-radius:50%;background:#fff;clip-path:inset(14px 16px 0 0)"></div>
<div class="a" style="left:52.5px;top:706px;width:2px;height:5.5px;background:#e38d26"></div><div class="a" style="left:52.5px;top:713px;width:2px;height:2px;background:#e38d26"></div>
<svg class="a" style="left:0;top:320px" width="58" height="447" viewBox="0 320 58 447"><g fill="none" stroke="#fff" stroke-width="1.1" stroke-linejoin="round">
<path d="M8.7 329.2 C10.5 327.3 15.5 327 17.6 329.3 C19.7 327 24.7 327.3 26.5 329.2 V342.8 C24.5 341.5 20 341.3 17.6 343.2 C15.2 341.3 10.7 341.5 8.7 342.8 Z"/>
<path d="M17.6 329.5 V331.3 M17.6 339.8 V343"/>
<path d="M26.6 331.8 H33.7 V329.4 L39.3 335 L33.7 340.6 V338.3 H26.6"/>
</g>
<g fill="none" stroke="#fdeedd" stroke-width="1">
<rect x="19.8" y="391.8" width="16.6" height="11.4"/><path d="M22 394.5 H24 M25.2 394.5 H33.2 M22 397.5 H24 M25.2 397.5 H33.2 M22 400.5 H24 M25.2 400.5 H33.2"/>
<path d="M8 470.5 H24.5 L26.5 466 L29 471 L31 467 L34 464.5 L36.5 464.5 L39 465 L43 461" stroke-width="1.2"/>
</g>
<text x="8" y="467.5" font-family="Liberation Sans" font-size="14.5" fill="#fdeedd" textLength="15.5" lengthAdjust="spacingAndGlyphs">€$</text>
<text x="8.3" y="405.5" font-family="Liberation Sans" font-size="21" fill="#fdeedd" textLength="9.8" lengthAdjust="spacingAndGlyphs">§</text>
<g fill="none" stroke="#fff" stroke-width="1.1" stroke-linejoin="round">
<path d="M8.7 521.2 C10.5 519.3 15.5 519 17.6 521.3 C19.7 519 24.7 519.3 26.5 521.2 V534.8 C24.5 533.5 20 533.3 17.6 535.2 C15.2 533.3 10.7 533.5 8.7 534.8 Z"/>
<path d="M17.6 521.5 V523.3 M17.6 531.8 V535"/>
<path d="M26.6 523.8 H33.7 V521.4 L39.3 527 L33.7 532.6 V530.3 H26.6"/>
<ellipse cx="17.6" cy="527.6" rx="2" ry="3.3" stroke-width="0.9"/>
<path d="M10.8 586.8 H20.2 V590.2 H17.3 V594.8 H29.2 V602 H10.8 V594.8 H13.3 V590.2 H10.8 Z"/>
<rect x="8.6" y="652.5" width="23.8" height="15" rx="0.8"/><path d="M9.5 653.5 L20.5 662 L31.5 653.5 M17.5 659.8 L9.5 666.5 M23.5 659.8 L31.5 666.5"/>
</g><rect x="24.2" y="586.3" width="2.6" height="11.7" fill="#fff"/></svg>
<div class="a" style="left:58px;top:22px;width:2px;height:745px;background:#a9d4f5;"></div>
<div class="a" style="left:58px;top:384px;width:2px;height:128px;background:#f3d3ae;"></div>
<div class="a" style="left:58px;top:704px;width:2px;height:63px;background:#f3d3ae;"></div>
<svg class="a" style="left:46px;top:90px" width="16" height="30" viewBox="46 90 16 30"><path d="M60 93 V94.5 L51.5 105 L60 115.5 V117 L60 117 Z" fill="#0670bf"/>
<path d="M59 90 V94.8 L50.5 105 L59 115.2 V120" fill="none" stroke="#a9d4f5" stroke-width="2"/></svg>
<div class="a" style="left:60px;top:22px;width:190px;height:745px;background:#0670bf;"></div>
<svg class="a" style="left:226px;top:24px" width="16" height="16" viewBox="0 0 16 16"><g fill="#7fb3de"><path d="M8 2 L14 8 L12.5 9 L10.5 8.5 L8 11 L8.5 13 L7.5 14 L2.5 9 L3.5 8 L5.5 8.5 L8 6 L7.5 4 Z"/><path d="M5 11 L2 14.5 L1.5 14 L4.5 10.5 Z"/></g></svg>
<div class="a" style="left:72.80px;top:42.00px;font-size:20px;line-height:20px;color:#d6e6f4;letter-spacing:0.447px;">Lista modułów</div>
<div class="a" style="left:71.00px;top:72.00px;font-size:13px;line-height:13px;color:#e9f2fa;letter-spacing:0.404px;">Strona startowa</div>
<div class="a" style="left:71px;top:86px;width:173px;height:1px;background:#2f84cc;"></div>
<div class="a" style="left:71.60px;top:90.90px;font-size:11.2px;line-height:11.2px;color:#7db3e0;font-weight:bold;">HANDEL</div>
<svg class="a" style="left:236px;top:91.9px" width="9" height="8" viewBox="0 0 9 8"><path d="M8 0.3 V6.8 H1.3 Z" fill="#5b9bd3"/></svg>
<div class="a" style="left:71.80px;top:104.70px;font-size:13.5px;line-height:13.5px;color:#78aedc;transform:scaleX(0.7885);transform-origin:0 0;">SP</div>
<div class="a" style="left:93.50px;top:104.70px;font-size:13.3px;line-height:13.3px;color:#e9f2fa;">Sprzedaż</div>
<div class="a" style="left:71.80px;top:120.75px;font-size:13.5px;line-height:13.5px;color:#78aedc;transform:scaleX(0.9280);transform-origin:0 0;">ZN</div>
<div class="a" style="left:93.50px;top:120.75px;font-size:13.3px;line-height:13.3px;color:#e9f2fa;">Zamówienia</div>
<div class="a" style="left:71.80px;top:136.80px;font-size:13.5px;line-height:13.5px;color:#78aedc;transform:scaleX(0.8232);transform-origin:0 0;">ZP</div>
<div class="a" style="left:93.50px;top:136.80px;font-size:13.3px;line-height:13.3px;color:#e9f2fa;">Zakup</div>
<div class="a" style="left:71.80px;top:152.85px;font-size:13.5px;line-height:13.5px;color:#78aedc;transform:scaleX(0.8379);transform-origin:0 0;">ZL</div>
<div class="a" style="left:93.50px;top:152.85px;font-size:13.3px;line-height:13.3px;color:#e9f2fa;">Zlecenia</div>
<div class="a" style="left:71px;top:169px;width:173px;height:1px;background:#2f84cc;"></div>
<div class="a" style="left:71.60px;top:173.85px;font-size:11.2px;line-height:11.2px;color:#7db3e0;font-weight:bold;letter-spacing:0.291px;">MAGAZYN</div>
<svg class="a" style="left:236px;top:174.9px" width="9" height="8" viewBox="0 0 9 8"><path d="M8 0.3 V6.8 H1.3 Z" fill="#5b9bd3"/></svg>
<div class="a" style="left:71.80px;top:189.65px;font-size:11px;line-height:11px;color:#78aedc;transform:scaleX(0.9465);transform-origin:0 0;">WM</div>
<div class="a" style="left:93.50px;top:187.65px;font-size:13.3px;line-height:13.3px;color:#e9f2fa;letter-spacing:0.064px;">Wydania</div>
<div class="a" style="left:71.80px;top:203.70px;font-size:13.5px;line-height:13.5px;color:#78aedc;transform:scaleX(0.8988);transform-origin:0 0;">PM</div>
<div class="a" style="left:93.50px;top:203.70px;font-size:13.3px;line-height:13.3px;color:#e9f2fa;">Przyjęcia</div>
<div class="a" style="left:71.80px;top:219.75px;font-size:13.5px;line-height:13.5px;color:#78aedc;transform:scaleX(0.9037);transform-origin:0 0;">IN</div>
<div class="a" style="left:93.50px;top:219.75px;font-size:13.3px;line-height:13.3px;color:#e9f2fa;letter-spacing:0.009px;">Inwentaryzacja</div>
<div class="a" style="left:71px;top:236px;width:173px;height:1px;background:#2f84cc;"></div>
<div class="a" style="left:71.60px;top:240.75px;font-size:11.2px;line-height:11.2px;color:#7db3e0;font-weight:bold;">ZARZĄDZANIE</div>
<svg class="a" style="left:236px;top:241.8px" width="9" height="8" viewBox="0 0 9 8"><path d="M8 0.3 V6.8 H1.3 Z" fill="#5b9bd3"/></svg>
<div class="a" style="left:71.80px;top:254.55px;font-size:13.5px;line-height:13.5px;color:#78aedc;transform:scaleX(0.8821);transform-origin:0 0;">CN</div>
<div class="a" style="left:93.50px;top:254.55px;font-size:13.3px;line-height:13.3px;color:#e9f2fa;">Cenniki</div>
<div class="a" style="left:71.80px;top:270.60px;font-size:13.5px;line-height:13.5px;color:#78aedc;transform:scaleX(0.9280);transform-origin:0 0;">UZ</div>
<div class="a" style="left:93.50px;top:270.60px;font-size:13.3px;line-height:13.3px;color:#e9f2fa;">Urządzenia</div>
<div class="a" style="left:71px;top:287px;width:173px;height:1px;background:#2f84cc;"></div>
<div class="a" style="left:71.60px;top:291.60px;font-size:11.2px;line-height:11.2px;color:#7db3e0;font-weight:bold;letter-spacing:-0.134px;">FINANSE</div>
<svg class="a" style="left:236px;top:292.6px" width="9" height="8" viewBox="0 0 9 8"><path d="M8 0.3 V6.8 H1.3 Z" fill="#5b9bd3"/></svg>
<div class="a" style="left:71.80px;top:305.40px;font-size:13.5px;line-height:13.5px;color:#78aedc;transform:scaleX(0.7607);transform-origin:0 0;">KS</div>
<div class="a" style="left:93.50px;top:305.40px;font-size:13.3px;line-height:13.3px;color:#e9f2fa;transform:scaleX(0.9958);transform-origin:0 0;">Operacje kasowe</div>
<div class="a" style="left:71.80px;top:321.45px;font-size:13.5px;line-height:13.5px;color:#78aedc;transform:scaleX(0.7305);transform-origin:0 0;">RS</div>
<div class="a" style="left:93.50px;top:321.45px;font-size:13.3px;line-height:13.3px;color:#e9f2fa;letter-spacing:0.097px;">Raporty kasowe</div>
<div class="a" style="left:71.80px;top:337.50px;font-size:13.5px;line-height:13.5px;color:#78aedc;transform:scaleX(0.7219);transform-origin:0 0;">SE</div>
<div class="a" style="left:93.50px;top:337.50px;font-size:13.3px;line-height:13.3px;color:#e9f2fa;transform:scaleX(0.9581);transform-origin:0 0;">Sesje kasowe</div>
<div class="a" style="left:71.80px;top:353.55px;font-size:13.5px;line-height:13.5px;color:#78aedc;transform:scaleX(0.8905);transform-origin:0 0;">BN</div>
<div class="a" style="left:93.50px;top:353.55px;font-size:13.3px;line-height:13.3px;color:#e9f2fa;letter-spacing:0.122px;">Operacje bankowe</div>
<div class="a" style="left:71.80px;top:371.60px;font-size:11px;line-height:11px;color:#78aedc;transform:scaleX(0.9716);transform-origin:0 0;">WG</div>
<div class="a" style="left:93.50px;top:369.60px;font-size:13.3px;line-height:13.3px;color:#e9f2fa;letter-spacing:0.118px;">Wyciągi bankowe</div>
<div class="a" style="left:71.80px;top:385.65px;font-size:13.5px;line-height:13.5px;color:#78aedc;transform:scaleX(0.9172);transform-origin:0 0;">DB</div>
<div class="a" style="left:93.50px;top:385.65px;font-size:13.3px;line-height:13.3px;color:#e9f2fa;letter-spacing:0.064px;">Dyspozycje bankowe</div>
<div class="a" style="left:71px;top:402px;width:173px;height:1px;background:#2f84cc;"></div>
<div class="a" style="left:71.60px;top:406.65px;font-size:11.2px;line-height:11.2px;color:#7db3e0;font-weight:bold;letter-spacing:-0.090px;">ROZLICZENIA</div>
<svg class="a" style="left:236px;top:407.7px" width="9" height="8" viewBox="0 0 9 8"><path d="M8 0.3 V6.8 H1.3 Z" fill="#5b9bd3"/></svg>
<div class="a" style="left:71.80px;top:420.45px;font-size:13.5px;line-height:13.5px;color:#78aedc;transform:scaleX(0.8565);transform-origin:0 0;">RN</div>
<div class="a" style="left:93.50px;top:420.45px;font-size:13.3px;line-height:13.3px;color:#e9f2fa;letter-spacing:-0.031px;">Rozrachunki</div>
<div class="a" style="left:71.80px;top:436.50px;font-size:13.5px;line-height:13.5px;color:#78aedc;transform:scaleX(0.7939);transform-origin:0 0;">RL</div>
<div class="a" style="left:93.50px;top:436.50px;font-size:13.3px;line-height:13.3px;color:#e9f2fa;transform:scaleX(0.9720);transform-origin:0 0;">Sesje rozliczeniowe</div>
<div class="a" style="left:71.80px;top:452.55px;font-size:13.5px;line-height:13.5px;color:#78aedc;transform:scaleX(0.9823);transform-origin:0 0;">WI</div>
<div class="a" style="left:93.50px;top:452.55px;font-size:13.3px;line-height:13.3px;color:#e9f2fa;">Windykacja</div>
<div class="a" style="left:71.80px;top:468.60px;font-size:13.5px;line-height:13.5px;color:#78aedc;transform:scaleX(0.7219);transform-origin:0 0;">EY</div>
<div class="a" style="left:93.50px;top:468.60px;font-size:13.3px;line-height:13.3px;color:#e9f2fa;">Kursy walut</div>
<div class="a" style="left:71px;top:485px;width:173px;height:1px;background:#2f84cc;"></div>
<div class="a" style="left:71.60px;top:489.60px;font-size:11.2px;line-height:11.2px;color:#7db3e0;font-weight:bold;">KARTOTEKI</div>
<svg class="a" style="left:236px;top:490.6px" width="9" height="8" viewBox="0 0 9 8"><path d="M8 0.3 V6.8 H1.3 Z" fill="#5b9bd3"/></svg>
<div class="a" style="left:71.80px;top:503.40px;font-size:13.5px;line-height:13.5px;color:#78aedc;transform:scaleX(0.8551);transform-origin:0 0;">AS</div>
<div class="a" style="left:93.50px;top:503.40px;font-size:13.3px;line-height:13.3px;color:#e9f2fa;">Asortyment</div>
<div class="a" style="left:71.80px;top:519.45px;font-size:13.5px;line-height:13.5px;color:#78aedc;transform:scaleX(0.8721);transform-origin:0 0;">KL</div>
<div class="a" style="left:93.50px;top:519.45px;font-size:13.3px;line-height:13.3px;color:#e9f2fa;">Klienci</div>
<div class="a" style="left:71.80px;top:535.50px;font-size:13.5px;line-height:13.5px;color:#78aedc;transform:scaleX(0.9408);transform-origin:0 0;">IX</div>
<div class="a" style="left:93.50px;top:535.50px;font-size:13.3px;line-height:13.3px;color:#e9f2fa;">Instytucje</div>
<div class="a" style="left:71.80px;top:553.55px;font-size:11px;line-height:11px;color:#78aedc;transform:scaleX(1.0836);transform-origin:0 0;">WX</div>
<div class="a" style="left:93.50px;top:551.55px;font-size:13.3px;line-height:13.3px;color:#e9f2fa;">Wspólnicy</div>
<div class="a" style="left:71.80px;top:567.60px;font-size:13.5px;line-height:13.5px;color:#78aedc;transform:scaleX(0.8551);transform-origin:0 0;">PX</div>
<div class="a" style="left:93.50px;top:567.60px;font-size:13.3px;line-height:13.3px;color:#e9f2fa;">Pracownicy</div>
<div class="a" style="left:71px;top:584px;width:173px;height:1px;background:#2f84cc;"></div>
<div class="a" style="left:71.60px;top:588.60px;font-size:11.2px;line-height:11.2px;color:#7db3e0;font-weight:bold;">EWIDENCJE DODATKOWE</div>
<svg class="a" style="left:236px;top:589.6px" width="9" height="8" viewBox="0 0 9 8"><path d="M8 0.3 V6.8 H1.3 Z" fill="#5b9bd3"/></svg>
<div class="a" style="left:71.80px;top:604.40px;font-size:11px;line-height:11px;color:#78aedc;transform:scaleX(1.0477);transform-origin:0 0;">DW</div>
<div class="a" style="left:93.50px;top:602.40px;font-size:13.3px;line-height:13.3px;color:#e9f2fa;letter-spacing:0.321px;">Dokumenty wewnętrzne</div>
<div class="a" style="left:71.80px;top:620.45px;font-size:11px;line-height:11px;color:#78aedc;transform:scaleX(1.2085);transform-origin:0 0;">DD</div>
<div class="a" style="left:93.50px;top:618.45px;font-size:13.3px;line-height:13.3px;color:#e9f2fa;letter-spacing:0.268px;">Dekretacja dokumentów</div>
<div class="a" style="left:71.80px;top:634.50px;font-size:13.5px;line-height:13.5px;color:#78aedc;transform:scaleX(0.8212);transform-origin:0 0;">RP</div>
<div class="a" style="left:93.50px;top:634.50px;font-size:13.3px;line-height:13.3px;color:#e9f2fa;">Raporty</div>
<div class="a" style="left:71.80px;top:650.55px;font-size:13.5px;line-height:13.5px;color:#78aedc;transform:scaleX(0.7768);transform-origin:0 0;">KF</div>
<div class="a" style="left:93.50px;top:650.55px;font-size:13.3px;line-height:13.3px;color:#e9f2fa;">Konfiguracja</div>
</body></html>
